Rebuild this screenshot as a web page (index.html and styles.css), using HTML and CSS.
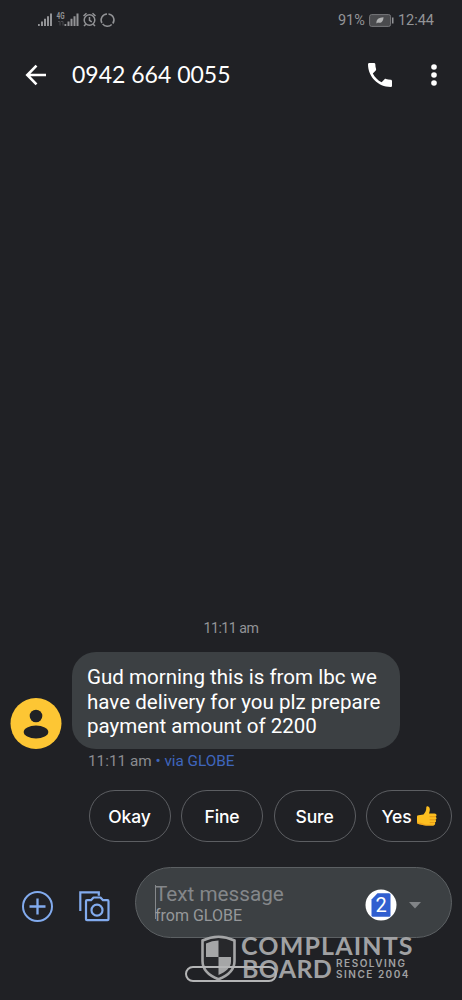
FILE: index.html
```html
<!DOCTYPE html>
<html lang="en">
<head>
<meta charset="utf-8">
<title>Messages</title>
<link rel="stylesheet" href="styles.css">
</head>
<body>
<div class="phone">
  <div class="status">
    <svg class="status-icons" width="80" height="18" viewBox="0 0 80 18">
      <g fill="#929396">
        <path d="M0 13h1.800v2H0zM3 10.500h2v4.500H3zM6 7.700h2v7.300H6zM9 5.200h2v9.800H9zM12 2.500h2v12.500h-2z"/>
        <path d="M26.500 13h1.800v2h-1.800zM29.500 10.500h2v4.500h-2zM32.500 7.700h2v7.300h-2zM35.500 5.200h2v9.800h-2zM38.500 2.500h2v12.500h-2z"/>
      </g>
      <text class="net" x="18.500" y="8" textLength="8" lengthAdjust="spacingAndGlyphs">4G</text>
      <path d="M20 10.500h2v4M25 14.500v-4h-2" fill="none" stroke="#4b4c50"/>
      <g fill="none" stroke="#929396" stroke-width="1.500">
        <circle cx="51.500" cy="9" r="5.300"/><path d="M51.500 6v3.300l2.300 1.500M45.500 5l3-2.700M57.500 5l-3-2.700M47.800 13.200L46 15M55.200 13.200L57 15"/>
        <path d="M70.500 3a6 6 0 0 1 4.300 9.500M73.700 13.500A6 6 0 0 1 64.600 12.900M63.900 12A6 6 0 0 1 69 3"/>
      </g>
    </svg>
    <div class="status-right">
      <span class="battery-text">91%</span>
      <svg width="25" height="13" viewBox="0 0 25 13">
        <rect x=".6" y=".6" width="21" height="11.800" rx="2" fill="#4a4b4e" stroke="#77787b"/>
        <path d="M23 3.500h1.500v6H23z" fill="#929396"/>
        <path d="M7.500 9.500C7 5 10 3.500 14.500 3.200c0 4-2.500 6.500-5.500 5.300z" fill="#b2b3b4"/>
      </svg>
      <span class="clock">12:44</span>
    </div>
  </div>

  <header class="bar">
    <svg class="back" width="22" height="22" viewBox="0 0 22 22" fill="none" stroke="#fff" stroke-width="2.600"><path d="M21 11H3M11.500 1.700L2.300 11l9.200 9.300"/></svg>
    <h1 class="title">0942 664 0055</h1>
    <svg class="call" width="24" height="24" viewBox="3 3 18 18" fill="#fff"><path d="M6.620 10.790c1.440 2.830 3.760 5.140 6.590 6.590l2.200-2.200c.27-.27.670-.36 1.020-.24 1.120.37 2.330.57 3.570.57.550 0 1 .45 1 1V20c0 .55-.45 1-1 1C10.610 21 3 13.390 3 4c0-.55.450-1 1-1h3.500c.55 0 1 .45 1 1 0 1.250.2 2.450.57 3.570.11.350.03.740-.25 1.020z"/></svg>
    <svg class="more" width="6" height="22" viewBox="0 0 6 22" fill="#fff"><circle cx="3" cy="3" r="2.800"/><circle cx="3" cy="11" r="2.800"/><circle cx="3" cy="19" r="2.800"/></svg>
  </header>

  <main class="thread">
    <div class="stamp">11:11 am</div>
    <div class="row">
      <svg class="avatar" width="52" height="52" viewBox="0 0 52 52"><circle cx="26" cy="26.500" r="25.500" fill="#fdc634"/><circle cx="26" cy="19" r="6.300" fill="#202125"/><ellipse cx="26" cy="35" rx="12.300" ry="6.500" fill="#202125"/></svg>
      <div class="bubble">Gud morning this is from lbc we<br>have delivery for you plz prepare<br>payment amount of 2200</div>
    </div>
    <div class="meta">11:11 am <span class="via">• via GLOBE</span></div>
  </main>

  <div class="chips">
    <span class="chip">Okay</span>
    <span class="chip">Fine</span>
    <span class="chip">Sure</span>
    <span class="chip chip-last">Yes
      <svg width="20" height="20" viewBox="0 0 20 20"><path d="M0 10.500q0-1.300 1.500-1.300l5-.7C8.500 6 9.300 4.500 9.300 1.500 9.300-.5 12.500-.3 12.800 3c.1 1.700-.5 3.300-.8 4.500h5.500c2.500 0 2.500 3 .8 3.200 1.700.5 1.500 2.900 0 3.100 1.200.6.900 2.600-.5 2.800.8.800.3 2.900-1.600 2.900H9c-3 0-4-1.300-6.500-1.300C.8 18.200 0 17.500 0 16z" fill="#fdbf20"/><path d="M12.500 10.700h5.800M12.700 13.800h5.600M12.700 16.600h5" stroke="#e59514" stroke-width=".9"/><path d="M0 15.500c1 1.500 3 1 5 1.700s3.500 1.300 6 1.300h6l-.5 1H9c-3 0-4-1.300-6.500-1.300C.8 18.200 0 17.500 0 15.500z" fill="#f2a51c"/></svg>
    </span>
  </div>

  <div class="compose">
    <svg class="plus" width="31" height="31" viewBox="0 0 31 31" fill="none" stroke="#82abee" stroke-width="2"><circle cx="15.500" cy="15.500" r="14.500"/><path d="M15.500 7.500v16M7.500 15.500h16" stroke-width="2.300"/></svg>
    <svg class="gallery" width="31" height="31" viewBox="0 0 31 31" fill="none" stroke="#82abee" stroke-width="2.200"><path d="M1.300 20V1.300h18.500v3.500"/><path d="M7 10.200q0-1 1-1h4l2.500-2.700h7L24 9.200h4.500q1 0 1 1v18q0 1-1 1H8q-1 0-1-1z" stroke-linejoin="round"/><circle cx="18" cy="19.200" r="5.500"/></svg>
    <div class="field">
      <div class="hint"><div class="hint-main">Text message</div><div class="hint-sub">from GLOBE</div></div>
      <svg class="sim" width="32" height="32" viewBox="0 0 32 32"><circle cx="16" cy="16" r="15.500" fill="#fff"/><path d="M12.500 4.300H24q1.500 0 1.500 1.500v20.400q0 1.500-1.500 1.500H8q-1.500 0-1.500-1.500V10.500z" fill="#315fd0"/><text class="sim-num" x="16" y="22.500" text-anchor="middle">2</text></svg>
      <svg class="caret" width="12" height="7" viewBox="0 0 12 7"><path d="M0 0h12L6 6.500z" fill="#818487"/></svg>
    </div>
  </div>

  <div class="nav-pill"></div>
  <div class="mark">
    <svg width="35" height="46" viewBox="0 0 35 46"><path d="M1.500 5.500Q17.500-2 33.500 5.500V26C33.500 35 26 41 17.500 44.300 9 41 1.500 35 1.500 26z" fill="#27282b" stroke="#a5a6a7" stroke-width="2.600"/><path d="M5 8.500q6-2.800 12.500-3V22H5zM17.500 22H30v4.500c0 6-5.500 10.500-12.500 13.500z" fill="#a5a6a7"/></svg>
    <div class="mark-words">
      <div class="mark-top">COMPLAINTS</div>
      <div class="mark-bottom"><span class="mark-board">BOARD</span><span class="mark-small">RESOLVING<br>SINCE 2004</span></div>
    </div>
  </div>
</div>
</body>
</html>
```
FILE: styles.css
```css
* { box-sizing: border-box; }
body { margin: 0; background: #202125; }
svg { display: block; flex: none; }
.phone {
  position: relative;
  width: 462px;
  height: 1000px;
  overflow: hidden;
  display: flex;
  flex-direction: column;
  background: #202125;
  font-family: Roboto, sans-serif;
  color: #fff;
}
.status {
  height: 40px;
  padding: 0 28px 0 38px;
  display: flex;
  align-items: center;
  justify-content: space-between;
  color: #939497;
  font-size: 14.500px;
}
.net { font: bold 8.500px Roboto, sans-serif; fill: #929396; }
.status-right { display: flex; align-items: center; gap: 4px; }
.bar { height: 70px; padding: 0 25px; display: flex; align-items: center; }
.title {
  margin: 0 auto 0 25px;
  padding-bottom: 3px;
  font: 400 23px Lato, sans-serif;
  white-space: nowrap;
}
.more { margin-left: 39px; }
.thread { flex: none; height: 680px; display: flex; flex-direction: column; justify-content: flex-end; }
.stamp { text-align: center; font-size: 14.200px; letter-spacing: -.5px; line-height: 20px; color: #939497; margin-bottom: 14px; }
.row { display: flex; align-items: flex-end; padding-left: 10px; gap: 10px; }
.bubble {
  width: 328px;
  height: 97px;
  padding: 13px 15px 11px;
  border-radius: 24px;
  background: #3c4043;
  font-size: 20.550px;
  line-height: 24.500px;
  white-space: nowrap;
}
.meta { padding-left: 88px; height: 41px; line-height: 24px; font-size: 15.300px; color: #8b8c90; white-space: nowrap; }
.via { color: #3f66bd; }
.chips { height: 52px; padding-left: 88.500px; display: flex; gap: 10.500px; }
.chip {
  width: 82px;
  height: 52px;
  flex: none;
  display: flex;
  align-items: center;
  justify-content: center;
  gap: 5px;
  border: 1px solid #5c5e62;
  border-radius: 26px;
  font: 500 17.500px Inter, sans-serif;
  letter-spacing: -.1px;
}
.chip-last { width: 86px; }
.compose { height: 70px; margin-top: 25px; padding-left: 22px; display: flex; align-items: center; }
.plus, .gallery { margin-top: 8px; }
.gallery { margin-left: 26px; }
.field {
  width: 317px;
  height: 71px;
  margin-left: 25px;
  padding: 0 30px 0 19px;
  display: flex;
  align-items: center;
  border: 1.500px solid #5c6063;
  border-radius: 36px;
  background: #3c4043;
}
.hint { margin-right: auto; border-left: 1px solid #85888b; height: 34px; display: flex; flex-direction: column; justify-content: center; }
.hint-main { margin: 4px 0 0 -1px; font-size: 20.700px; line-height: 24px; color: #84878a; }
.hint-sub { margin-left: -1px; font-size: 16px; line-height: 20px; color: #96989a; }
.sim { margin-top: 5px; }
.sim-num { font: 20px Roboto, sans-serif; fill: #fff; }
.caret { margin: 6px 0 0 12px; }
.nav-pill {
  position: absolute;
  left: 185px;
  top: 966px;
  width: 92px;
  height: 16px;
  border: 2px solid #b4b5b6;
  border-radius: 8px;
  z-index: 2;
}
.mark { position: absolute; left: 201px; top: 935px; display: flex; gap: 5px; color: #a0a1a3; font-family: Lato, sans-serif; font-weight: 700; white-space: nowrap; }
.mark-words { margin-top: -1px; }
.mark-top { font-size: 25px; line-height: 23px; letter-spacing: 1.150px; }
.mark-bottom { display: flex; gap: 4px; }
.mark-board { font-size: 25px; line-height: 23px; letter-spacing: .3px; padding-left: 1px; }
.mark-small { font: 600 10px/10.500px Inter, sans-serif; letter-spacing: 1.500px; padding-top: 1px; }
```
